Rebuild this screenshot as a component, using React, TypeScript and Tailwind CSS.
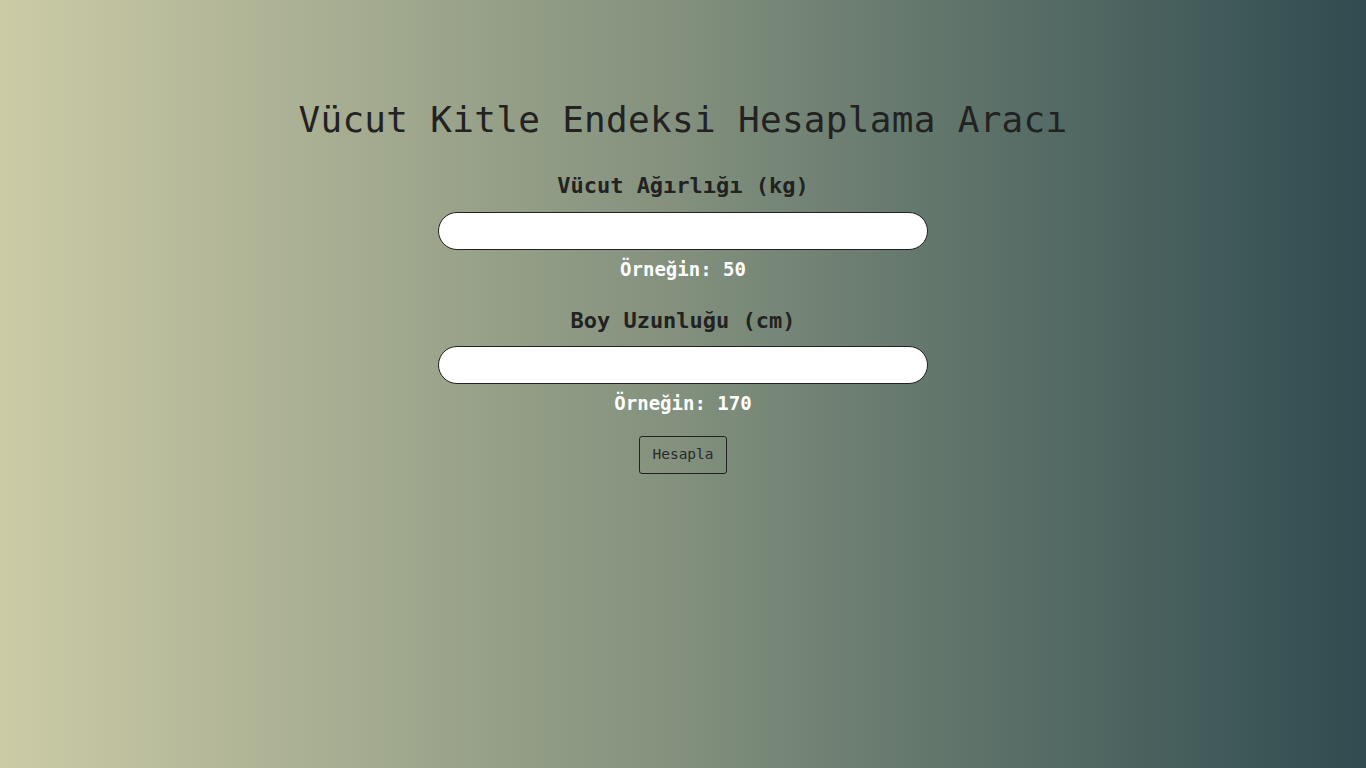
import React, { useState } from 'react';

const mono = { fontFamily: '"DejaVu Sans Mono", "Liberation Mono", monospace' };

const App: React.FC = () => {
  const [weight, setWeight] = useState('');
  const [height, setHeight] = useState('');

  return (
    <div
      className="min-h-screen w-full bg-gradient-to-r from-[#cccba6] via-[#82907d] to-[#304c50] flex flex-col items-center pt-[98px]"
      style={mono}
    >
      <h1 className="text-[36px] leading-[44px] text-[#222222] tracking-[0.3px]">Vücut Kitle Endeksi Hesaplama Aracı</h1>

      <label className="mt-[30px] text-[22px] leading-[28px] font-bold text-[#222222]">Vücut Ağırlığı (kg)</label>
      <input
        type="text"
        value={weight}
        onChange={(e) => setWeight(e.target.value)}
        className="mt-[12px] w-[490px] h-[38px] rounded-full border border-[#222222] bg-white px-4 outline-none"
      />
      <p className="mt-[7px] text-[19px] leading-[24px] font-bold text-white">Örneğin: 50</p>

      <label className="mt-[26px] text-[22px] leading-[28px] font-bold text-[#222222]">Boy Uzunluğu (cm)</label>
      <input
        type="text"
        value={height}
        onChange={(e) => setHeight(e.target.value)}
        className="mt-[11px] w-[490px] h-[38px] rounded-full border border-[#222222] bg-white px-4 outline-none"
      />
      <p className="mt-[7px] text-[19px] leading-[24px] font-bold text-white">Örneğin: 170</p>

      <button className="mt-[21px] w-[88px] h-[38px] rounded-[3px] border border-[#222222] text-[14.5px] text-[#2a2a2a] bg-transparent">
        Hesapla
      </button>
    </div>
  );
};

export default App;
